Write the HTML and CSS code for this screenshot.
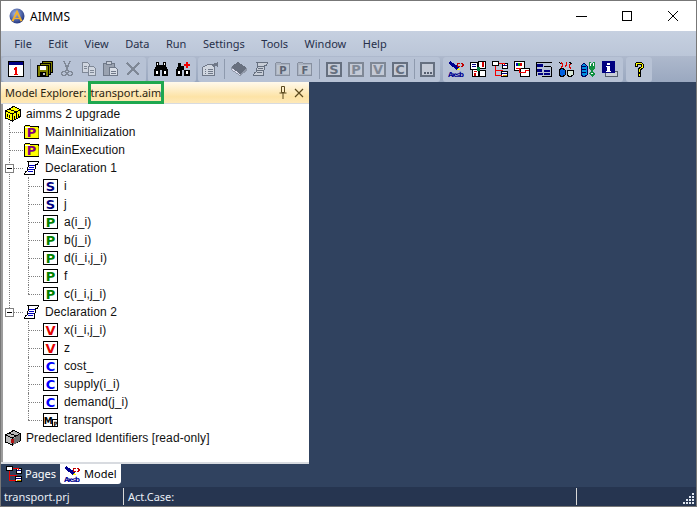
FILE: index.html
```html
<!DOCTYPE html>
<html lang="en">
<head>
    <meta charset="UTF-8">
    <title>AIMMS</title>
    <link rel="stylesheet" href="styles.css">
</head>
<body>
    <svg class="defs" width="0" height="0">
        <defs>
            <radialGradient id="globe" cx="0.4" cy="0.35" r="0.7">
                <stop offset="0" stop-color="#9db4e8"/>
                <stop offset="1" stop-color="#1c2f7a"/>
            </radialGradient>
            <symbol id="logo" viewBox="0 0 16 16">
                <circle cx="8" cy="8" r="7.5" fill="url(#globe)"/>
                <path d="M8 1.5L2.5 13l2 .5L8 6l3.5 7.5 2-.5z" fill="#f0b030"/>
                <path d="M5 10.500h6" stroke="#f0b030" stroke-width="1.200"/>
            </symbol>

            <!-- identifier boxes -->
            <symbol id="id-s" viewBox="0 0 16 16">
                <rect x="0.500" y="1.500" width="14" height="13" fill="#fff" stroke="#000"/>
                <text x="7.500" y="13" class="ic-letter" fill="#000080">S</text>
            </symbol>
            <symbol id="id-p" viewBox="0 0 16 16">
                <rect x="0.500" y="1.500" width="14" height="13" fill="#fff" stroke="#000"/>
                <text x="7.500" y="13" class="ic-letter" fill="#008000">P</text>
            </symbol>
            <symbol id="id-v" viewBox="0 0 16 16">
                <rect x="0.500" y="1.500" width="14" height="13" fill="#fff" stroke="#000"/>
                <text x="7.500" y="13" class="ic-letter" fill="#e00000">V</text>
            </symbol>
            <symbol id="id-c" viewBox="0 0 16 16">
                <rect x="0.500" y="1.500" width="14" height="13" fill="#fff" stroke="#000"/>
                <text x="7.500" y="13" class="ic-letter" fill="#0000ff">C</text>
            </symbol>
            <symbol id="id-m" viewBox="0 0 16 16">
                <rect x="0.500" y="1.500" width="14" height="13" fill="#fff" stroke="#000"/>
                <rect x="9.500" y="7.500" width="5" height="7" fill="#fff" stroke="#000"/>
                <text x="5.300" y="12" class="ic-letter ic-m" fill="#000">M</text>
                <text x="10.500" y="13.500" class="ic-tiny ic-sub" fill="#000">P</text>
            </symbol>
            <symbol id="proc" viewBox="0 0 16 16">
                <path d="M.5 14.500v-12l1-1h4l1 1h8v12z" fill="#ff0" stroke="#000"/>
                <path d="M1 3.500h5" stroke="#fff"/>
                <path d="M14 4v10" stroke="#a0a000"/>
                <text x="7.500" y="13" class="ic-letter" fill="#800080">P</text>
            </symbol>
            <symbol id="scroll" viewBox="0 0 16 16">
                <path d="M3.500 1.500h11v1l-1.500 2h-1l-2 9v1H.5v-1l1.500-2h1l2-9z" fill="#fff" stroke="#000"/>
                <path d="M5 5.500h6M5 7.500h5M4 9.500h6M4 11.500h5" stroke="#0000c0"/>
            </symbol>
            <symbol id="box" viewBox="0 0 16 16">
                <path d="M.5 5l8-4.500 7 3v7l-8 4.500-7-3z" fill="#ff0" stroke="#000"/>
                <path d="M.5 5l7 3 8-4.500M7.500 8v7M4 3l7 3v3" fill="none" stroke="#000"/>
                <path d="M2.500 8v3M4.500 9v3M9.500 10v3M11.500 9v3M13.500 8v3" stroke="#000"/>
            </symbol>
            <symbol id="box-ro" viewBox="0 0 16 16">
                <path d="M.5 5l8-4.500 7 3v7l-8 4.500-7-3z" fill="#b8b8b8" stroke="#000"/>
                <path d="M.5 5l7 3 8-4.500M7.500 8v7M4 3l7 3v3" fill="none" stroke="#000"/>
                <path d="M8 8.500l7-4.500v7l-7 4z" fill="#707070"/>
                <rect x="6" y="9" width="3" height="4" fill="#b01010"/>
            </symbol>

            <!-- toolbar -->
            <symbol id="calendar" viewBox="0 0 16 16">
                <rect x="0.500" y="0.500" width="15" height="15" fill="#fff" stroke="#000"/>
                <rect x="1" y="1" width="14" height="3" fill="#000080"/>
                <path d="M7 6h2v8H7zM6 7h1v2H6zM6 13h4v1H6z" fill="#f00000"/>
            </symbol>
            <symbol id="disks" viewBox="0 0 16 16">
                <rect x="5.500" y="0.500" width="10" height="11" fill="#808000" stroke="#000"/>
                <rect x="3.500" y="2.500" width="10" height="11" fill="#808000" stroke="#000"/>
                <rect x="0.500" y="4.500" width="11" height="11" fill="#808000" stroke="#000"/>
                <rect x="3" y="5" width="6" height="4" fill="#fff"/>
                <rect x="3" y="11" width="6" height="4" fill="#000"/>
                <rect x="6" y="12" width="2" height="2" fill="#c0c0c0"/>
            </symbol>
            <symbol id="cut" viewBox="0 0 16 16">
                <path d="M5 0l4 10M11 0L7 10" stroke="#7f8896" stroke-width="1.400" fill="none"/>
                <circle cx="5" cy="12.500" r="2.300" fill="none" stroke="#7f8896" stroke-width="1.300"/>
                <circle cx="11" cy="12.500" r="2.300" fill="none" stroke="#7f8896" stroke-width="1.300"/>
            </symbol>
            <symbol id="copy" viewBox="0 0 16 16">
                <path d="M1.500 1.500h5l2 2v8h-7z" fill="#d0d6e0" stroke="#7f8896"/>
                <path d="M7.500 5.500h5l2 2v7h-7z" fill="#d0d6e0" stroke="#7f8896"/>
                <path d="M3 5.500h3M3 7.500h3M9 9.500h4M9 11.500h4" stroke="#7f8896"/>
            </symbol>
            <symbol id="paste" viewBox="0 0 16 16">
                <rect x="0.500" y="2.500" width="11" height="12" fill="#9aa2b0" stroke="#6f7888"/>
                <rect x="3.500" y="0.500" width="5" height="3" fill="#c8ced8" stroke="#6f7888"/>
                <path d="M6.500 6.500h6l2 2v6h-8z" fill="#d8dde6" stroke="#6f7888"/>
                <path d="M8 10.500h5M8 12.500h5" stroke="#6f7888"/>
            </symbol>
            <symbol id="del" viewBox="0 0 16 16">
                <path d="M2 2l12 12M14 2L2 14" stroke="#7f8896" stroke-width="2" fill="none"/>
            </symbol>
            <symbol id="find" viewBox="0 0 16 16">
                <path d="M3 1h3v3h4V1h3v4l2 4v6H9V9H7v6H1V9l2-4z" fill="#000"/>
                <path d="M3 10h2v3H3zM11 10h2v3h-2zM4 2h1v2H4zM11 2h1v2h-1z" fill="#fff"/>
            </symbol>
            <symbol id="find-add" viewBox="0 0 16 16">
                <path d="M3 2h3v3h3v3h0v1H7v6H1V9l2-4zM10 9h5v6H9V9z" fill="#000"/>
                <path d="M3 10h2v3H3zM11 10h2v3h-2z" fill="#fff"/>
                <path d="M11 1h2v2h2v2h-2v2h-2V5H9V3h2z" fill="#f00000"/>
            </symbol>
            <symbol id="props" viewBox="0 0 16 16">
                <path d="M.5 6.500l5-3h7v11H.5z" fill="#d0d6e0" stroke="#6f7888"/>
                <path d="M3 8.500h1M6 8.500h5M3 10.500h1M6 10.500h5M3 12.500h1M6 12.500h5" stroke="#6f7888"/>
                <path d="M9 4l7-3v5l-2-1-2 1z" fill="#6f7888"/>
            </symbol>
            <symbol id="book" viewBox="0 0 16 16">
                <path d="M0 6l7-5 9 6-7 6z" fill="#68707f"/>
                <path d="M0 6v3l9 6 7-5V7l-7 6z" fill="#9098a8"/>
                <path d="M1 8l8 5.500" stroke="#dde" fill="none"/>
            </symbol>
            <symbol id="scroll-off" viewBox="0 0 16 16">
                <path d="M3.500 1.500h11v1l-1.500 2h-1l-2 9v1H.5v-1l1.500-2h1l2-9z" fill="#c8ced8" stroke="#667080"/>
                <path d="M5 5.500h6M5 7.500h5M4 9.500h6M4 11.500h5" stroke="#667080"/>
            </symbol>
            <symbol id="folder-p" viewBox="0 0 16 16">
                <path d="M.5 14.500v-12l1-1h4l1 1h8v12z" fill="#aab2c0" stroke="#8790a0"/>
                <path d="M2 4h12v9H2z" fill="#bcc4d0"/>
                <text x="8" y="13" class="ic-letter ic-small" fill="#5c6474">P</text>
            </symbol>
            <symbol id="folder-f" viewBox="0 0 16 16">
                <path d="M.5 14.500v-12l1-1h4l1 1h8v12z" fill="#aab2c0" stroke="#8790a0"/>
                <path d="M2 4h12v9H2z" fill="#bcc4d0"/>
                <text x="8" y="13" class="ic-letter ic-small" fill="#5c6474">F</text>
            </symbol>
            <symbol id="off-s" viewBox="0 0 16 16">
                <rect x="1" y="2" width="14" height="13" fill="#c4cad6" stroke="#667080" stroke-width="1.500"/>
                <text x="8" y="13" class="ic-letter" fill="#667080">S</text>
            </symbol>
            <symbol id="off-p" viewBox="0 0 16 16">
                <rect x="1" y="2" width="14" height="13" fill="#c4cad6" stroke="#7f8896" stroke-width="1.500"/>
                <text x="8" y="13" class="ic-letter" fill="#7f8896">P</text>
            </symbol>
            <symbol id="off-v" viewBox="0 0 16 16">
                <rect x="1" y="2" width="14" height="13" fill="#c4cad6" stroke="#7f8896" stroke-width="1.500"/>
                <text x="8" y="13" class="ic-letter" fill="#7f8896">V</text>
            </symbol>
            <symbol id="off-c" viewBox="0 0 16 16">
                <rect x="1" y="2" width="14" height="13" fill="#c4cad6" stroke="#667080" stroke-width="1.500"/>
                <text x="8" y="13" class="ic-letter" fill="#667080">C</text>
            </symbol>
            <symbol id="more" viewBox="0 0 16 16">
                <rect x="1" y="2" width="13" height="13" fill="#c4cad6" stroke="#667080" stroke-width="1.500"/>
                <path d="M4 11h2v2H4zM7 11h2v2H7zM10 11h2v2h-2z" fill="#555e6e"/>
            </symbol>
            <symbol id="model" viewBox="0 0 16 16">
                <path d="M0 2l2-2 9 6-2 3z" fill="#000090"/>
                <path d="M9 9l2-3 1 3z" fill="#ff0"/>
                <path d="M9 2h3v1h-2v2h2v1H9zM13 2h1l1 1 1-1v1l-1 1 1 1v1l-1-1-1 1h-1l1-2z" fill="#c00000"/>
                <text x="0" y="15.500" class="ic-tiny" textLength="16" fill="#000090">Ax≤b</text>
            </symbol>
            <symbol id="widgets" viewBox="0 0 16 16">
                <rect x="0.500" y="1.500" width="7" height="7" fill="#fff" stroke="#000"/>
                <rect x="8.500" y="0.500" width="7" height="7" fill="#fff" stroke="#000"/>
                <rect x="2.500" y="8.500" width="6" height="7" fill="#fff" stroke="#000"/>
                <rect x="9.500" y="9.500" width="6" height="6" fill="#fff" stroke="#000"/>
                <path d="M2 3h4v1H2zM2 5h4v1H2z" fill="#000080"/>
                <path d="M12 1h2v5h-2zM4 10h3v1H4zM4 12v3h2v-3z" fill="#d00000"/>
                <path d="M7 6h3v4H7z" fill="#008040"/>
            </symbol>
            <symbol id="pages" viewBox="0 0 16 16">
                <rect x="0.500" y="0.500" width="6" height="4" fill="#fff" stroke="#000"/>
                <rect x="10.500" y="2.500" width="5" height="5" fill="#fff" stroke="#000"/>
                <rect x="9.500" y="10.500" width="6" height="5" fill="#fff" stroke="#000"/>
                <path d="M3.500 5v9.500h6M3.500 9.500h7M7 2.500h5v1" fill="none" stroke="#f00000"/>
                <path d="M11 4h4v1h-4zM10 12h5v1h-5z" fill="#000080"/>
                <path d="M11 14h4v1h-4z" fill="#d0a000"/>
            </symbol>
            <symbol id="windows" viewBox="0 0 16 16">
                <rect x="0.500" y="0.500" width="10" height="9" fill="#fff" stroke="#000"/>
                <rect x="6.500" y="7.500" width="9" height="8" fill="#fff" stroke="#000"/>
                <path d="M2 2h2v3H2z" fill="#0000c0"/>
                <path d="M4 2h2v3H4z" fill="#00a000"/>
                <path d="M6 2h2v3H6z" fill="#d00000"/>
                <path d="M2 7.500h5M5.500 7v4.500h6v-2h3" fill="none" stroke="#f00000"/>
            </symbol>
            <symbol id="list" viewBox="0 0 16 16">
                <path d="M0 1h16v1H0zM0 1h1v14H0zM15 6h1v10h-1zM6 15h10v1H6z" fill="#000"/>
                <path d="M1 3h6v3H1zM1 8h5v3H1zM8 9h6v2H8zM8 12h6v2H8zM2 12h5v2H2z" fill="#000080"/>
                <path d="M8 5h7v1H8z" fill="#000"/>
            </symbol>
            <symbol id="mice" viewBox="0 0 16 16">
                <path d="M1 9l3-2 3 2v5l-3 2-3-2z" fill="#0060e0" stroke="#000"/>
                <path d="M9 9h6v5l-3 2-3-2z" fill="#d8e8d8" stroke="#000"/>
                <path d="M3 1l2 3-2 3M8 1l1 2-2 3M13 2l-2 3 2 3" fill="none" stroke="#e00000"/>
                <path d="M1 1l2 2M11 1l3 2" stroke="#000"/>
            </symbol>
            <symbol id="blocks" viewBox="0 0 16 16">
                <path d="M1 5l3-3 3 3v9l-3 2-3-2z" fill="#0090e0" stroke="#000060"/>
                <path d="M2 5.500h4M2 8.500h4M2 11.500h4" stroke="#000060"/>
                <path d="M9 1h2v3l2-3h2v6l-3 3 3 3-3 3-3-3 2-3-2-3z" fill="#109040"/>
                <path d="M10 2h1v3h-1zM13 2h1v3h-1zM11 12h2v1h-2z" fill="#fff"/>
            </symbol>
            <symbol id="info" viewBox="0 0 16 16">
                <rect x="3.500" y="10.500" width="12" height="5" fill="#c8ced8" stroke="#555e6e"/>
                <rect x="0" y="0" width="13" height="12" fill="#000080"/>
                <path d="M5 2h3v2H5zM5 5h3v5h1v1H4v-1h1V6H4V5z" fill="#fff"/>
            </symbol>
            <symbol id="help" viewBox="0 0 16 16">
                <path d="M4 3l2-2h4l2 2v4l-3 2v2H7V8l3-2V3H6v2H4zM7 12h2v3H7z" fill="#ffff00" stroke="#000"/>
            </symbol>
        </defs>
    </svg>

    <div class="window">
        <header class="titlebar">
            <svg class="logo"><use href="#logo"/></svg>
            <span class="title">AIMMS</span>
            <div class="caption">
                <span class="cap-btn"><svg width="12" height="12"><path d="M1 6.500h11" stroke="#000"/></svg></span>
                <span class="cap-btn"><svg width="12" height="12"><rect x="1.500" y="1.500" width="9" height="9" fill="none" stroke="#000"/></svg></span>
                <span class="cap-btn"><svg width="12" height="12"><path d="M1 1l10 10M11 1L1 11" stroke="#000"/></svg></span>
            </div>
        </header>

        <nav class="menubar">
            <span class="menu">File</span>
            <span class="menu">Edit</span>
            <span class="menu">View</span>
            <span class="menu">Data</span>
            <span class="menu">Run</span>
            <span class="menu">Settings</span>
            <span class="menu">Tools</span>
            <span class="menu">Window</span>
            <span class="menu">Help</span>
        </nav>

        <div class="toolbar">
            <div class="band band-a">
                <span class="tool"><svg><use href="#calendar"/></svg></span>
                <i class="sep"></i>
                <span class="tool"><svg><use href="#disks"/></svg></span>
                <span class="tool"><svg><use href="#cut"/></svg></span>
                <span class="tool"><svg><use href="#copy"/></svg></span>
                <span class="tool"><svg><use href="#paste"/></svg></span>
                <span class="tool"><svg><use href="#del"/></svg></span>
            </div>
            <div class="band band-b">
                <span class="tool"><svg><use href="#find"/></svg></span>
                <span class="tool"><svg><use href="#find-add"/></svg></span>
            </div>
            <div class="band band-c">
                <span class="tool"><svg><use href="#props"/></svg></span>
                <i class="sep"></i>
                <span class="tool"><svg><use href="#book"/></svg></span>
                <span class="tool"><svg><use href="#scroll-off"/></svg></span>
                <span class="tool"><svg><use href="#folder-p"/></svg></span>
                <span class="tool"><svg><use href="#folder-f"/></svg></span>
                <i class="sep"></i>
                <span class="tool"><svg><use href="#off-s"/></svg></span>
                <span class="tool"><svg><use href="#off-p"/></svg></span>
                <span class="tool"><svg><use href="#off-v"/></svg></span>
                <span class="tool"><svg><use href="#off-c"/></svg></span>
                <i class="sep sep-last"></i>
                <span class="tool"><svg><use href="#more"/></svg></span>
            </div>
            <div class="band band-d">
                <span class="tool"><svg><use href="#model"/></svg></span>
                <span class="tool"><svg><use href="#widgets"/></svg></span>
                <span class="tool"><svg><use href="#pages"/></svg></span>
                <span class="tool"><svg><use href="#windows"/></svg></span>
                <span class="tool"><svg><use href="#list"/></svg></span>
                <span class="tool"><svg><use href="#mice"/></svg></span>
                <span class="tool"><svg><use href="#blocks"/></svg></span>
                <span class="tool"><svg><use href="#info"/></svg></span>
            </div>
            <div class="band band-e">
                <span class="tool"><svg><use href="#help"/></svg></span>
            </div>
        </div>

        <main class="workspace">
            <section class="panel">
                <div class="panel-head">
                    <span class="panel-label">Model Explorer:</span>
                    <span class="panel-file">transport.aim</span>
                    <span class="panel-pin">
                        <svg width="8" height="13"><path d="M2.500 .5h3v6h-3zM.5 7h7M4 7v6" fill="none" stroke="#5c4a1e"/></svg>
                    </span>
                    <span class="panel-close">
                        <svg width="10" height="10"><path d="M1 1l8 8M9 1L1 9" stroke="#5c4a1e" stroke-width="1.200"/></svg>
                    </span>
                </div>
                <div class="tree">
                    <div class="row row-root"><svg><use href="#box"/></svg>aimms 2 upgrade</div>
                    <ul class="branch">
                        <li><div class="row"><svg><use href="#proc"/></svg>MainInitialization</div></li>
                        <li><div class="row"><svg><use href="#proc"/></svg>MainExecution</div></li>
                        <li>
                            <span class="toggle"></span>
                            <div class="row"><svg><use href="#scroll"/></svg>Declaration 1</div>
                            <ul class="branch sub">
                                <li><div class="row"><svg><use href="#id-s"/></svg>i</div></li>
                                <li><div class="row"><svg><use href="#id-s"/></svg>j</div></li>
                                <li><div class="row"><svg><use href="#id-p"/></svg>a(i_i)</div></li>
                                <li><div class="row"><svg><use href="#id-p"/></svg>b(j_i)</div></li>
                                <li><div class="row"><svg><use href="#id-p"/></svg>d(i_i,j_i)</div></li>
                                <li><div class="row"><svg><use href="#id-p"/></svg>f</div></li>
                                <li><div class="row"><svg><use href="#id-p"/></svg>c(i_i,j_i)</div></li>
                            </ul>
                        </li>
                        <li>
                            <span class="toggle"></span>
                            <div class="row"><svg><use href="#scroll"/></svg>Declaration 2</div>
                            <ul class="branch sub">
                                <li><div class="row"><svg><use href="#id-v"/></svg>x(i_i,j_i)</div></li>
                                <li><div class="row"><svg><use href="#id-v"/></svg>z</div></li>
                                <li><div class="row"><svg><use href="#id-c"/></svg>cost_</div></li>
                                <li><div class="row"><svg><use href="#id-c"/></svg>supply(i_i)</div></li>
                                <li><div class="row"><svg><use href="#id-c"/></svg>demand(j_i)</div></li>
                                <li><div class="row"><svg><use href="#id-m"/></svg>transport</div></li>
                            </ul>
                        </li>
                    </ul>
                    <div class="row row-root"><svg><use href="#box-ro"/></svg>Predeclared Identifiers [read-only]</div>
                </div>
            </section>
            <div class="tabs">
                <span class="tab"><svg><use href="#pages"/></svg>Pages</span>
                <span class="tab tab-on"><svg><use href="#model"/></svg>Model</span>
            </div>
        </main>

        <footer class="status">
            <span class="st-project">transport.prj</span>
            <span class="st-case">Act.Case:</span>
            <span class="st-end"></span>
            <span class="grip">
                <svg width="14" height="14">
                    <path d="M10 1h2v2h-2zM7 4h2v2H7zM10 4h2v2h-2zM4 7h2v2H4zM7 7h2v2H7zM10 7h2v2h-2zM1 10h2v2H1zM4 10h2v2H4zM7 10h2v2H7zM10 10h2v2h-2z" fill="#dfe6f0"/>
                </svg>
            </span>
        </footer>
    </div>
</body>
</html>
```

FILE: styles.css
```css
* {
    box-sizing: border-box;
}

body {
    margin: 0;
    overflow: hidden;
    font-family: "Noto Sans", sans-serif;
    font-size: 11px;
}

.defs {
    position: absolute;
}

.ic-letter {
    font-family: "DejaVu Sans", sans-serif;
    font-weight: bold;
    font-size: 13px;
    text-anchor: middle;
}

.ic-small {
    font-size: 10px;
}

.ic-m {
    font-size: 9px;
}

.ic-tiny {
    font-family: "DejaVu Sans", sans-serif;
    font-size: 7px;
    font-weight: bold;
}

.ic-sub {
    font-size: 6px;
}

.window {
    width: 697px;
    height: 507px;
    display: flex;
    flex-direction: column;
    border: 1px solid #777;
}

/* title bar */
.titlebar {
    height: 30px;
    flex: none;
    background: #fff;
    display: flex;
    align-items: center;
    padding-left: 8px;
}

.logo {
    width: 16px;
    height: 16px;
    margin-right: 5px;
}

.title {
    color: #000;
    font-size: 12px;
}

.caption {
    margin-left: auto;
    display: flex;
}

.cap-btn {
    width: 46px;
    height: 30px;
    display: flex;
    align-items: center;
    justify-content: center;
}

/* menu */
.menubar {
    height: 25px;
    flex: none;
    display: flex;
    align-items: center;
    padding-left: 5px;
    background: linear-gradient(#c6d0e0, #bbc6d8);
}

.menu {
    padding: 0 8.25px;
    color: #27304a;
}

/* toolbar */
.toolbar {
    height: 26px;
    flex: none;
    display: flex;
    align-items: center;
    padding-left: 1px;
    gap: 2px;
    background: linear-gradient(#aeb9cd, #9aa8c0);
}

.band {
    height: 25px;
    display: flex;
    align-items: center;
    padding: 0 2px;
    border-radius: 3px;
    background: #b7c2d5;
}

.band-a {
    padding-left: 3px;
}

.band-c {
    padding: 0 1px;
}

.band-d {
    margin-left: 1px;
}

.band-e {
    margin-left: 1px;
}

.tool {
    width: 22px;
    height: 22px;
    display: flex;
    align-items: center;
    justify-content: center;
}

.tool svg {
    width: 16px;
    height: 16px;
    shape-rendering: crispEdges;
}

.sep {
    width: 1px;
    height: 20px;
    margin: 0 3px;
    background: #8e9aae;
}

.sep-last {
    margin-right: 2px;
}

/* workspace */
.workspace {
    flex: 1;
    display: flex;
    flex-direction: column;
    background: #30425f;
}

.panel {
    width: 308px;
    height: 382px;
    flex: none;
    display: flex;
    flex-direction: column;
    background: #d8dbe0;
}

.panel-head {
    height: 21px;
    flex: none;
    display: flex;
    align-items: center;
    padding-left: 4px;
    color: #2b2410;
    background: linear-gradient(#fff9ec, #fde3a6 70%, #fee9b8);
}

.panel-file {
    height: 23px;
    margin-left: 1px;
    line-height: 17px;
    border: 3px solid #1fa84f;
}

.panel-pin {
    margin-left: auto;
    margin-right: 7px;
    display: flex;
}

.panel-close {
    margin-right: 5px;
    display: flex;
}

.tree {
    height: 358px;
    margin-top: 1px;
    padding-top: 1px;
    background: #fff;
    border-left: 2px solid #9c9c9c;
    font-family: "Liberation Sans", sans-serif;
    font-size: 12px;
    letter-spacing: 0.1px;
    color: #111;
}

.row {
    height: 18px;
    display: flex;
    align-items: center;
    gap: 5px;
    white-space: nowrap;
}

.row svg {
    width: 16px;
    height: 16px;
    flex: none;
    shape-rendering: crispEdges;
}

.row-root {
    padding-left: 2px;
}

.branch {
    list-style: none;
    margin: 0 0 0 6px;
    padding: 0;
}

.branch.sub {
    margin-left: 4px;
}

.branch > li {
    position: relative;
    padding-left: 15px;
}

.branch > li::before {
    content: "";
    position: absolute;
    left: 0;
    top: 0;
    height: 100%;
    border-left: 1px dotted #808080;
}

.branch > li:last-child::before {
    height: 9px;
}

.branch > li::after {
    content: "";
    position: absolute;
    left: 0;
    top: 9px;
    width: 14px;
    border-top: 1px dotted #808080;
}

.toggle {
    position: absolute;
    z-index: 1;
    left: -4px;
    top: 5px;
    width: 9px;
    height: 9px;
    border: 1px solid #808080;
    background: linear-gradient(#000, #000) center / 5px 1px no-repeat #fff;
}

/* tabs */
.tabs {
    height: 23px;
    flex: none;
    display: flex;
    padding-left: 4px;
    color: #fff;
}

.tab {
    height: 20px;
    display: flex;
    align-items: center;
    gap: 3px;
    padding: 0 4px 1px 1px;
}

.tab svg {
    width: 16px;
    height: 16px;
    shape-rendering: crispEdges;
}

.tab-on {
    gap: 4px;
    padding: 0 4px 1px;
    color: #000;
    background: #fff;
    border-radius: 0 0 3px 3px;
}

/* status */
.status {
    height: 19px;
    flex: none;
    display: flex;
    align-items: center;
    color: #e8edf5;
    background: #263550;
}

.st-project {
    width: 122px;
    padding-left: 3px;
}

.st-case {
    width: 453px;
    height: 17px;
    padding-left: 4px;
    line-height: 17px;
    border-left: 1px solid #d8d8d8;
}

.st-end {
    height: 17px;
    border-left: 1px solid #d8d8d8;
}

.grip {
    margin-left: auto;
    display: flex;
    align-self: flex-end;
}
```
